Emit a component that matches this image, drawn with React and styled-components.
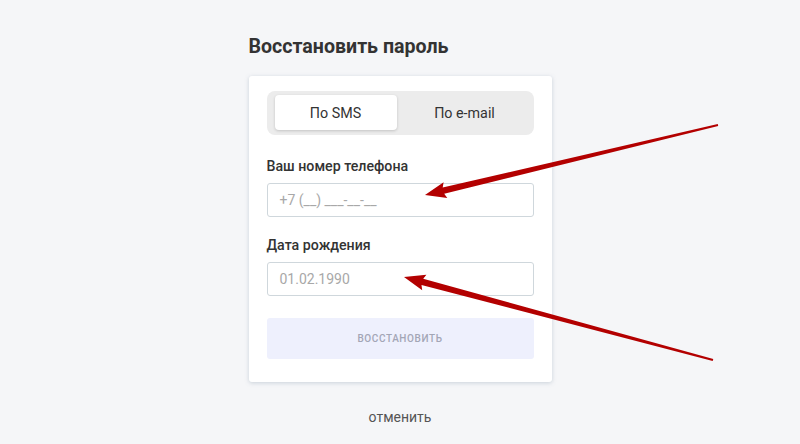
import React from "react";
import styled, { createGlobalStyle } from "styled-components";

const Global = createGlobalStyle`
  html, body { margin: 0; padding: 0; background: #f5f6f8; }
  body { font-family: Roboto, "Noto Sans", sans-serif; color: #333; }
  * { box-sizing: border-box; }
`;

const Page = styled.div`
  position: relative;
  width: 800px;
  height: 444px;
  overflow: hidden;
  display: flex;
  flex-direction: column;
  align-items: center;
  padding-top: 36px;
`;

const Column = styled.div`
  width: 303px;
  display: flex;
  flex-direction: column;
`;

const Title = styled.h1`
  margin: 0 0 18px;
  font-size: 19.6px;
  line-height: 22px;
  font-weight: 700;
  color: #333;
`;

const Card = styled.div`
  background: #fff;
  border-radius: 3px;
  box-shadow: 0 1px 4px rgba(120, 140, 160, 0.35);
  padding: 15px 18px 23px;
  display: flex;
  flex-direction: column;
`;

const Tabs = styled.div`
  display: flex;
  height: 44px;
  padding: 4px 1px 5px 8px;
  background: #ececec;
  border-radius: 8px;
  margin-bottom: 23px;
`;

const Tab = styled.div`
  flex: ${(p) => (p.$active ? "0 0 122px" : "1")};
  display: flex;
  align-items: center;
  justify-content: center;
  font-size: 14.3px;
  color: #333;
  border-radius: 4px;
  background: ${(p) => (p.$active ? "#fff" : "transparent")};
  box-shadow: ${(p) => (p.$active ? "0 1px 3px rgba(0,0,0,0.18)" : "none")};
`;

const Label = styled.div`
  font-size: 14.2px;
  line-height: 16px;
  font-weight: 500;
  color: #333;
  margin-bottom: 9px;
`;

const Input = styled.div`
  height: 34px;
  border: 1px solid #cfd7dc;
  border-radius: 3px;
  display: flex;
  align-items: center;
  padding-left: 12px;
  font-size: 14px;
  color: #a8a8a8;
  margin-bottom: ${(p) => p.$mb}px;
`;

const Button = styled.div`
  height: 41px;
  border-radius: 3px;
  background: #eef0fd;
  display: flex;
  align-items: center;
  justify-content: center;
  font-size: 10px;
  font-weight: 500;
  letter-spacing: 0.6px;
  color: #a3a6b6;
`;

const Cancel = styled.div`
  margin-top: 27px;
  text-align: center;
  font-size: 14px;
  line-height: 16px;
  color: #555;
`;

const Overlay = styled.svg`
  position: absolute;
  left: 0;
  top: 0;
  pointer-events: none;
`;

function arrowPoints(x1, y1, x2, y2) {
  const dx = x2 - x1;
  const dy = y2 - y1;
  const len = Math.hypot(dx, dy);
  const ux = dx / len;
  const uy = dy / len;
  const nx = -uy;
  const ny = ux;
  const headLen = 19;
  const headW = 8;
  const w0 = 1;
  const w1 = 3.2;
  const bx = x2 - ux * headLen;
  const by = y2 - uy * headLen;
  const pts = [
    [x1 + nx * w0, y1 + ny * w0],
    [bx + nx * w1, by + ny * w1],
    [bx + nx * headW - ux * 2, by + ny * headW - uy * 2],
    [x2, y2],
    [bx - nx * headW - ux * 2, by - ny * headW - uy * 2],
    [bx - nx * w1, by - ny * w1],
    [x1 - nx * w0, y1 - ny * w0],
  ];
  return pts.map((p) => p.map((v) => v.toFixed(1)).join(",")).join(" ");
}

export default function App() {
  return (
    <>
      <Global />
      <Page>
        <Column>
          <Title>Восстановить пароль</Title>
          <Card>
            <Tabs>
              <Tab $active>По SMS</Tab>
              <Tab>По e-mail</Tab>
            </Tabs>
            <Label>Ваш номер телефона</Label>
            <Input $mb={20}>+7 (__) ___-__-__</Input>
            <Label>Дата рождения</Label>
            <Input $mb={22}>01.02.1990</Input>
            <Button>ВОССТАНОВИТЬ</Button>
          </Card>
          <Cancel>отменить</Cancel>
        </Column>
        <Overlay width="800" height="444" viewBox="0 0 800 444">
          <polygon points={arrowPoints(718, 125, 425, 195)} fill="#b30000" />
          <polygon points={arrowPoints(713, 360, 404, 277)} fill="#b30000" />
        </Overlay>
      </Page>
    </>
  );
}
